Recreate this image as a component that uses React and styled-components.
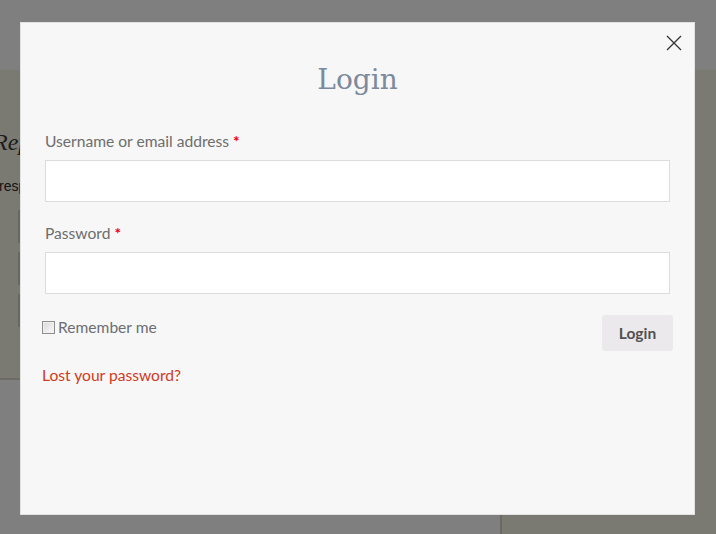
import React from "react";
import styled, { createGlobalStyle } from "styled-components";

const GlobalStyle = createGlobalStyle`
  html, body {
    margin: 0;
    padding: 0;
    background: #fff;
  }
  body {
    font-family: Lato, "Liberation Sans", sans-serif;
    overflow: hidden;
  }
  * { box-sizing: border-box; }
`;

const Page = styled.div`
  width: 716px;
  height: 534px;
  overflow: hidden;
  display: flex;
  flex-direction: column;
`;

const Header = styled.header`
  height: 70px;
  background: #ffffff;
  flex-shrink: 0;
`;

const Main = styled.main`
  flex: 1;
  display: grid;
  grid-template-columns: 500px 1fr;
`;

const Column = styled.div`
  display: flex;
  flex-direction: column;
`;

const Section = styled.section`
  height: 310px;
  background: #f4f4e4;
  border-bottom: 2px solid #d8d8c8;
  padding: 57px 0 0 0;
  font-family: "Liberation Sans", sans-serif;
`;

const Sidebar = styled.aside`
  background: #f4f4e4;
  border-left: 2px solid #d4d4c4;
`;

const ReplyTitle = styled.h3`
  margin: 0 0 21px -7px;
  font-family: "Liberation Serif", serif;
  font-style: italic;
  font-weight: normal;
  font-size: 24px;
  line-height: 30px;
  color: #3a3a3a;
`;

const Note = styled.p`
  margin: 0 0 16px -1px;
  font-size: 14px;
  color: #2a2a2a;
`;

const GhostInput = styled.div`
  width: 300px;
  height: 33px;
  margin: 0 0 9px 18px;
  border: 2px solid #d0d0c4;
  background: #fff;
`;

const Overlay = styled.div`
  position: fixed;
  inset: 0;
  background: rgba(0, 0, 0, 0.5);
`;

const Modal = styled.div`
  position: fixed;
  left: 20px;
  top: 22px;
  width: 675px;
  height: 493px;
  background: #f7f7f7;
  border: 1px solid #e2e2e2;
  padding: 39px 21px;
`;

const Close = styled.button`
  position: absolute;
  top: 11px;
  right: 11px;
  width: 18px;
  height: 18px;
  padding: 0;
  border: 0;
  background: none;
  cursor: pointer;
  color: #333;
  display: flex;
  align-items: center;
  justify-content: center;
`;

const Title = styled.h2`
  margin: 0 0 32px;
  text-align: center;
  font-family: "DejaVu Serif", "Liberation Serif", serif;
  font-weight: normal;
  font-size: 28px;
  line-height: 36px;
  color: #7b8a9d;
`;

const Field = styled.div`
  padding: 0 3px;
  margin-bottom: 20px;
`;

const Label = styled.label`
  display: block;
  font-size: 15.6px;
  line-height: 22px;
  color: #6d6d6d;
  margin-bottom: 8px;
`;

const Required = styled.span`
  color: #e00;
  font-weight: bold;
`;

const TextInput = styled.input`
  display: block;
  width: 100%;
  height: 42px;
  border: 1px solid #dcdcdc;
  background: #fff;
  padding: 0 10px;
  font-size: 15px;
  outline: none;
`;

const Actions = styled.div`
  display: flex;
  justify-content: space-between;
  align-items: flex-start;
`;

const Remember = styled.label`
  display: flex;
  align-items: center;
  margin-top: 2px;
  font-size: 15.6px;
  line-height: 22px;
  color: #6b6e74;
`;

const Check = styled.input`
  appearance: none;
  width: 13px;
  height: 13px;
  margin: 0 3px 0 0;
  border: 1px solid #8f8f8f;
  background: linear-gradient(135deg, #d8d8d8, #fbfbfb);
  box-shadow: inset 0 0 0 1px #f0f0f0;
`;

const Submit = styled.button`
  margin-top: 1px;
  width: 71px;
  height: 36px;
  border: 0;
  border-radius: 3px;
  background: #ebe9eb;
  color: #515151;
  font-family: Lato, "Liberation Sans", sans-serif;
  font-weight: bold;
  font-size: 15.5px;
  cursor: pointer;
`;

const LostLink = styled.a`
  display: inline-block;
  margin-top: 13px;
  font-size: 15.6px;
  line-height: 22px;
  color: #d2391d;
  text-decoration: none;
`;

export default function App() {
  return (
    <>
      <GlobalStyle />
      <Page>
        <Header />
        <Main>
          <Column>
            <Section>
              <ReplyTitle>Reply</ReplyTitle>
              <Note>responses are welcome</Note>
              <GhostInput />
              <GhostInput />
              <GhostInput />
            </Section>
          </Column>
          <Sidebar />
        </Main>
      </Page>
      <Overlay />
      <Modal>
        <Close aria-label="Close">
          <svg width="16" height="16" viewBox="0 0 16 16">
            <path d="M1 1 L15 15 M15 1 L1 15" stroke="currentColor" strokeWidth="1.3" fill="none" />
          </svg>
        </Close>
        <Title>Login</Title>
        <form>
          <Field>
            <Label>
              Username or email address <Required>*</Required>
            </Label>
            <TextInput type="text" />
          </Field>
          <Field>
            <Label>
              Password <Required>*</Required>
            </Label>
            <TextInput type="password" />
          </Field>
          <Actions>
            <Remember>
              <Check type="checkbox" />
              Remember me
            </Remember>
            <Submit type="button">Login</Submit>
          </Actions>
          <LostLink href="#">Lost your password?</LostLink>
        </form>
      </Modal>
    </>
  );
}
